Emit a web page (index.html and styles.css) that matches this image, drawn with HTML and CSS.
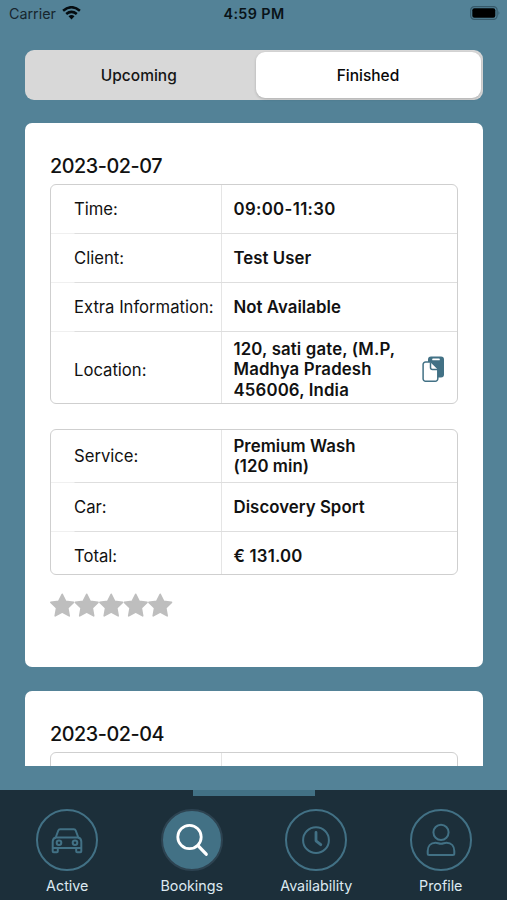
FILE: index.html
```html
<!DOCTYPE html>
<html lang="en">
<head>
<meta charset="utf-8">
<title>Bookings</title>
<link rel="stylesheet" href="styles.css">
</head>
<body>
<div class="app">
  <header class="status">
    <div class="carrier"><span class="carrier-name">Carrier</span>
      <svg class="wifi" width="19" height="14" viewBox="0 0 19 14" fill="none" stroke="#050c10" stroke-width="2.6"><path d="M1.1 4.7Q9.5-2.2 17.9 4.7M4.2 8Q9.5 3.7 14.8 8"/><path d="M9.5 13.4 6.5 10.3Q9.5 7.9 12.5 10.3Z" fill="#050c10" stroke="none"/></svg>
    </div>
    <span class="clock">4:59 PM</span>
    <svg class="battery" width="31" height="14" viewBox="0 0 31 14"><rect x=".7" y=".7" width="26.4" height="12.6" rx="3.6" fill="none" stroke="#36596a" stroke-width="1.2"/><rect x="2.3" y="2.3" width="23" height="9.4" rx="2" fill="#000"/><path d="M28.5 4.8q1.8 2.2 0 4.4z" fill="#36596a"/></svg>
  </header>
  <nav class="segments">
    <div class="segment"><span class="upcoming">Upcoming</span></div>
    <div class="segment selected"><span class="finished">Finished</span></div>
  </nav>
  <main class="list">
    <article class="card">
      <h2 class="date">2023-02-07</h2>
      <section class="table">
        <div class="row"><div class="label">Time:</div><div class="value hours">09:00-11:30</div></div>
        <div class="row"><div class="label">Client:</div><div class="value">Test User</div></div>
        <div class="row"><div class="label">Extra Information:</div><div class="value">Not Available</div></div>
        <div class="row address"><div class="label">Location:</div><div class="value"><span>120, sati gate, (M.P,<br>Madhya Pradesh<br>456006, India</span>
          <svg class="copy" width="23" height="27" viewBox="0 0 23 27"><rect x="6" y=".5" width="16" height="21" rx="3" fill="#427185"/><path d="M11 3.4h6" stroke="#fff" stroke-width="1.7" stroke-linecap="round"/><path d="M3.6 6.1h5.800l6.400 6.400v10.200a2.500 2.500 0 0 1-2.500 2.500H3.600a2.500 2.500 0 0 1-2.500-2.500V8.600a2.500 2.500 0 0 1 2.500-2.500Z" fill="#fff" stroke="#427185" stroke-width="1.500"/><path d="M8.500 6.200v5.200q0 2 2 2h5.300" fill="none" stroke="#427185" stroke-width="1.500"/></svg>
        </div></div>
      </section>
      <section class="table second">
        <div class="row service"><div class="label">Service:</div><div class="value">Premium Wash<br>(120 min)</div></div>
        <div class="row"><div class="label">Car:</div><div class="value">Discovery Sport</div></div>
        <div class="row last"><div class="label">Total:</div><div class="value total">€ 131.00</div></div>
      </section>
      <svg class="stars" width="123" height="25" viewBox="0 0 123 25" fill="#bebebe" stroke="#bebebe" stroke-width="1.6" stroke-linejoin="round">
        <defs><path id="star" d="m12.2 1.300 3.400 6.900 7.900 1.200-5.700 5.500 1.400 8-7-3.800-7 3.800 1.400-8L.9 9.400l7.900-1.200Z"/></defs>
        <use href="#star"/><use href="#star" x="24.5"/><use href="#star" x="49"/><use href="#star" x="73.5"/><use href="#star" x="98"/>
      </svg>
    </article>
    <article class="card">
      <h2 class="date">2023-02-04</h2>
      <section class="table">
        <div class="row"><div class="label"></div><div class="value"></div></div>
      </section>
    </article>
  </main>
  <footer class="tabs">
    <div class="tab">
      <div class="ring"><svg width="60" height="60" viewBox="0 0 60 60"><path d="M18.500 28 21.300 20.500q.5-1.300 1.800-1.300h13.800q1.300 0 1.800 1.300L41.500 28M18.500 27.500h23q2.800 1.200 2.800 4.300v9.400q0 1-1 1h-3.100q-1 0-1-1V38H20.800v3.200q0 1-1 1h-3.100q-1 0-1-1v-9.400q0-3.100 2.800-4.300ZM16 38h5M39 38h5"/><circle cx="22" cy="32.800" r="2.300"/><circle cx="38" cy="32.800" r="2.300"/></svg></div>
      <span>Active</span>
    </div>
    <div class="tab current">
      <div class="ring"><svg width="60" height="60" viewBox="0 0 60 60"><circle cx="27.500" cy="27" r="11.700"/><path d="m36 35.700 8.200 8.500" stroke-width="3.300"/></svg></div>
      <span>Bookings</span>
    </div>
    <div class="tab">
      <div class="ring"><svg width="60" height="60" viewBox="0 0 60 60"><circle cx="30" cy="30.200" r="12.900"/><path d="M30 22.500v8.300l4.800 3.900" stroke-width="2.800"/></svg></div>
      <span>Availability</span>
    </div>
    <div class="tab">
      <div class="ring"><svg width="60" height="60" viewBox="0 0 60 60"><circle cx="30" cy="22.300" r="7.600"/><path d="M24.500 32.800c2.500 0 3 1 5.500 1s3-1 5.500-1c5 0 7.800 3.500 7.800 8.300v2.300q0 1.500-1.500 1.500H18.200q-1.500 0-1.500-1.500v-2.300c0-4.800 2.800-8.300 7.800-8.300Z"/></svg></div>
      <span>Profile</span>
    </div>
  </footer>
</div>
</body>
</html>
```
FILE: styles.css
```css
* { box-sizing: border-box; }
body { margin: 0; font-family: Inter, "Liberation Sans", sans-serif; color: #111; }
.app { width: 507px; height: 900px; background: #538297; display: flex; flex-direction: column; overflow: hidden; }
.status { height: 50px; flex: none; display: grid; grid-template-columns: 1fr auto 1fr; align-items: start; padding: 6px 6px 0 9px; }
.carrier { display: flex; gap: 6px; font-size: 14.300px; line-height: 16px; color: #17262e; }
.clock { font-size: 14.300px; line-height: 16px; font-weight: 600; letter-spacing: .4px; margin-right: 2px; color: #091318; }
.battery { justify-self: end; }
.segments { height: 50px; flex: none; margin: 0 24.500px 0 25px; padding: 2px; background: #d8d8d8; border-radius: 9px; display: flex; }
.segment { flex: 1; display: flex; align-items: center; justify-content: center; font-size: 15.500px; font-weight: 500; color: #151515; padding-right: 5px; }
.segment.selected { flex: 0 0 225px; background: #fff; border-radius: 9px; color: #080808; box-shadow: 0 1px 3px #0003; padding-right: 0; }
.list { margin: 23px 24.500px 0 25px; height: 643px; flex: none; overflow: hidden; }
.card { height: 544px; background: #fff; border-radius: 7px; padding: 31px 24.500px 0 25px; margin-bottom: 24px; }
.date { margin: 0; height: 30px; line-height: 25px; font-size: 19.800px; font-weight: 500; letter-spacing: -.45px; }
.table { border: 1px solid #cfcfcf; border-radius: 6px; overflow: hidden; }
.second { margin-top: 25px; }
.row { display: grid; grid-template-columns: 170.500px 1fr; height: 49px; position: relative; }
.row + .row::before { content: ""; position: absolute; top: -1px; left: 0; right: 0; height: 1px; background: linear-gradient(90deg, #f0f0f0 23px, #dedede 24px); }
.row.address { height: 71px; }
.row.service { height: 53px; }
.row.last { height: 42px; }
.row.last .label, .row.last .value { height: 49px; }
.label { display: flex; align-items: center; padding: 0 0 1px 23px; border-right: 1px solid #e5e5e5; font-size: 16.650px; white-space: nowrap; }
.value { display: flex; align-items: center; justify-content: space-between; padding: 0 12.500px 1px 12px; font-size: 16.800px; line-height: 20.300px; font-weight: 600; white-space: nowrap; letter-spacing: .05px; }
.address .value { letter-spacing: .15px; }
.address .value, .address .label { padding-top: 5px; }
.hours { letter-spacing: .35px; }
.total { letter-spacing: .2px; }
.copy { margin-top: -1px; }
.stars { display: block; margin-top: 18px; }
.tabs { height: 110px; margin-top: auto; background: #1c2f3a; padding: 0 4px 0 5px; display: grid; grid-template-columns: repeat(4, 1fr); position: relative; }
.tabs::before { content: ""; position: absolute; top: 0; left: 193px; width: 122px; height: 6px; background: #427185; }
.tab { display: flex; flex-direction: column; align-items: center; padding-top: 18.500px; color: #dce9f1; font-size: 14.300px; line-height: 18px; }
.tab span { margin-top: 6px; }
.ring { width: 62px; height: 62px; border: 2px solid #427185; border-radius: 50%; display: flex; align-items: center; justify-content: center; }
.ring svg { flex: none; fill: none; stroke: #427185; stroke-width: 2; stroke-linecap: round; stroke-linejoin: round; }
.current .ring { background: #427185; border-color: #2d4351; }
.current .ring svg { stroke: #fff; stroke-width: 2.800; }
```
